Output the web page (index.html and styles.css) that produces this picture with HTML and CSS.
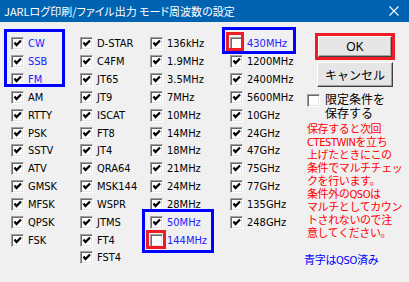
FILE: index.html
```html
<!DOCTYPE html>
<html lang="ja">
<head>
  <meta charset="UTF-8">
  <title>JARLログ印刷/ファイル出力 モード周波数の設定</title>
  <link rel="stylesheet" href="styles.css">
</head>
<body>
  <div class="window">
    <!-- Title bar -->
    <div class="titlebar">
      <span class="title">JARLログ印刷/ファイル出力 モード周波数の設定</span>
      <svg class="close" width="10" height="10" viewBox="0 0 10 10">
        <path d="M0.5 0.5 L9.5 9.5 M9.5 0.5 L0.5 9.5" stroke="#fff" stroke-width="1.1" fill="none"/>
      </svg>
    </div>

    <div class="content">
      <!-- Mode / band columns -->
      <div class="cols">
        <ul class="col col-mode">
          <li class="done"><span class="cb on"></span>CW</li>
          <li class="done"><span class="cb on"></span>SSB</li>
          <li class="done"><span class="cb on"></span>FM</li>
          <li><span class="cb on"></span>AM</li>
          <li><span class="cb on"></span>RTTY</li>
          <li><span class="cb on"></span>PSK</li>
          <li><span class="cb on"></span>SSTV</li>
          <li><span class="cb on"></span>ATV</li>
          <li><span class="cb on"></span>GMSK</li>
          <li><span class="cb on"></span>MFSK</li>
          <li><span class="cb on"></span>QPSK</li>
          <li><span class="cb on"></span>FSK</li>
        </ul>
        <ul class="col col-digi">
          <li><span class="cb on"></span>D-STAR</li>
          <li><span class="cb on"></span>C4FM</li>
          <li><span class="cb on"></span>JT65</li>
          <li><span class="cb on"></span>JT9</li>
          <li><span class="cb on"></span>ISCAT</li>
          <li><span class="cb on"></span>FT8</li>
          <li><span class="cb on"></span>JT4</li>
          <li><span class="cb on"></span>QRA64</li>
          <li><span class="cb on"></span>MSK144</li>
          <li><span class="cb on"></span>WSPR</li>
          <li><span class="cb on"></span>JTMS</li>
          <li><span class="cb on"></span>FT4</li>
          <li><span class="cb on"></span>FST4</li>
        </ul>
        <ul class="col col-hf">
          <li><span class="cb on"></span>136kHz</li>
          <li><span class="cb on"></span>1.9MHz</li>
          <li><span class="cb on"></span>3.5MHz</li>
          <li><span class="cb on"></span>7MHz</li>
          <li><span class="cb on"></span>10MHz</li>
          <li><span class="cb on"></span>14MHz</li>
          <li><span class="cb on"></span>18MHz</li>
          <li><span class="cb on"></span>21MHz</li>
          <li><span class="cb on"></span>24MHz</li>
          <li><span class="cb on"></span>28MHz</li>
          <li class="done"><span class="cb on"></span>50MHz</li>
          <li class="done"><span class="cb"></span>144MHz</li>
        </ul>
        <ul class="col col-uhf">
          <li class="done"><span class="cb"></span>430MHz</li>
          <li><span class="cb on"></span>1200MHz</li>
          <li><span class="cb on"></span>2400MHz</li>
          <li><span class="cb on"></span>5600MHz</li>
          <li><span class="cb on"></span>10GHz</li>
          <li><span class="cb on"></span>24GHz</li>
          <li><span class="cb on"></span>47GHz</li>
          <li><span class="cb on"></span>75GHz</li>
          <li><span class="cb on"></span>77GHz</li>
          <li><span class="cb on"></span>135GHz</li>
          <li><span class="cb on"></span>248GHz</li>
        </ul>
      </div>

      <!-- Buttons and notes -->
      <div class="side">
        <div class="ok-frame"><button class="btn btn-ok">OK</button></div>
        <button class="btn btn-cancel">キャンセル</button>
        <div class="keep"><span class="cb"></span><span>限定条件を<br>保存する</span></div>
        <p class="note">保存すると次回<br>CTESTWINを立ち<br>上げたときにこの<br>条件でマルチチェッ<br>クを行います。<br>条件外のQSOは<br>マルチとしてカウン<br>トされないので注<br>意してください。</p>
        <p class="legend">青字はQSO済み</p>
      </div>
    </div>

    <!-- Highlight marks drawn over the dialog -->
    <div class="mark mark-blue mark-modes"></div>
    <div class="mark mark-blue mark-430"></div>
    <div class="mark mark-red mark-430cb"></div>
    <div class="mark mark-blue mark-vhf"></div>
    <div class="mark mark-red mark-144cb"></div>
  </div>
</body>
</html>
```

FILE: styles.css
```css
/* General */
body {
  margin: 0;
  background: #f0f0f0;
  font-family: "DejaVu Sans Condensed", "DejaVu Sans", "Noto Sans CJK JP", sans-serif;
  font-stretch: condensed;
  font-size: 11px;
  color: #000;
}

.window {
  position: relative;
  width: 409px;
  height: 282px;
  overflow: hidden;
}

/* Title bar */
.titlebar {
  height: 22px;
  background: #0063b1;
  color: #fff;
  display: flex;
  align-items: center;
  justify-content: space-between;
  padding: 0 10px 0 4px;
}

.title {
  font-family: "Noto Sans CJK JP", sans-serif;
  font-size: 11px;
  font-feature-settings: "palt";
  white-space: nowrap;
}

/* Content */
.content {
  display: flex;
  padding-top: 13px;
}

.cols {
  display: flex;
  padding-left: 11px;
}

.col {
  list-style: none;
  margin: 0;
  padding: 0;
}

.col-mode { width: 69px; }
.col-digi { width: 70px; }
.col-hf { width: 80px; }
.col-uhf { width: 74px; }

.col li {
  height: 17.83px;
  display: flex;
  align-items: center;
  gap: 4px;
  white-space: nowrap;
}

.col li.done {
  color: #2020ff;
}

/* Checkbox */
.cb {
  flex: none;
  display: inline-block;
  width: 13px;
  height: 13px;
  box-sizing: border-box;
  background: #fff;
  border: 1px solid;
  border-color: #a0a0a0 #fff #fff #a0a0a0;
  box-shadow: inset 1px 1px 0 #696969, inset -1px -1px 0 #e3e3e3;
}

.cb.on {
  background: #fff url("data:image/svg+xml,%3Csvg xmlns='http://www.w3.org/2000/svg' width='11' height='11'%3E%3Cpath d='M2.5 4.5 L4.5 7 L9 2.5' stroke='%23000' stroke-width='2.2' fill='none'/%3E%3C/svg%3E") no-repeat 0 0;
}

/* Right side */
.side {
  display: flex;
  flex-direction: column;
  align-items: flex-start;
  margin-top: -2px;
  white-space: nowrap;
}

.btn {
  font-family: "Liberation Sans", "Noto Sans CJK JP", sans-serif;
  font-size: 12px;
  color: #000;
  background: #e6e6e6;
  box-sizing: border-box;
  padding: 0;
  border: 1px solid;
  border-color: #fff #404040 #404040 #fff;
  box-shadow: inset -1px -1px 0 #a0a0a0;
}

.ok-frame {
  margin-left: 11px;
  border: 3px solid #ee1c24;
  width: 74px;
  height: 21px;
}

.btn-ok {
  width: 74px;
  height: 21px;
}

.btn-cancel {
  margin: 2px 0 0 13px;
  width: 76px;
  height: 25px;
  font-family: "Noto Sans CJK JP", sans-serif;
}

.keep {
  display: flex;
  gap: 5px;
  margin: 5px 0 0 3px;
  font-family: "Noto Sans CJK JP", sans-serif;
  font-size: 12px;
  line-height: 14px;
}

.keep .cb {
  margin-top: 2px;
}

.note {
  margin: 3px 0 0 3px;
  color: #ff0000;
  font-family: "DejaVu Sans Condensed", "Noto Sans CJK JP", sans-serif;
  font-size: 11px;
  line-height: 13px;
  letter-spacing: -0.4px;
}

.legend {
  margin: 11px 0 0 0;
  color: #0000ff;
  font-family: "DejaVu Sans Condensed", "Noto Sans CJK JP", sans-serif;
  font-size: 11px;
  letter-spacing: -0.3px;
}

/* Highlight marks */
.mark {
  position: absolute;
  box-sizing: border-box;
  border: 3px solid;
}

.mark-blue { border-color: #0000ff; }
.mark-red { border-color: #ee1c24; }

.mark-modes { left: 4px; top: 29px; width: 61px; height: 58px; }
.mark-430 { left: 222px; top: 27px; width: 74px; height: 27px; }
.mark-430cb { left: 226px; top: 32px; width: 18px; height: 19px; }
.mark-vhf { left: 142px; top: 209px; width: 72px; height: 44px; }
.mark-144cb { left: 146px; top: 230px; width: 20px; height: 19px; }
```
